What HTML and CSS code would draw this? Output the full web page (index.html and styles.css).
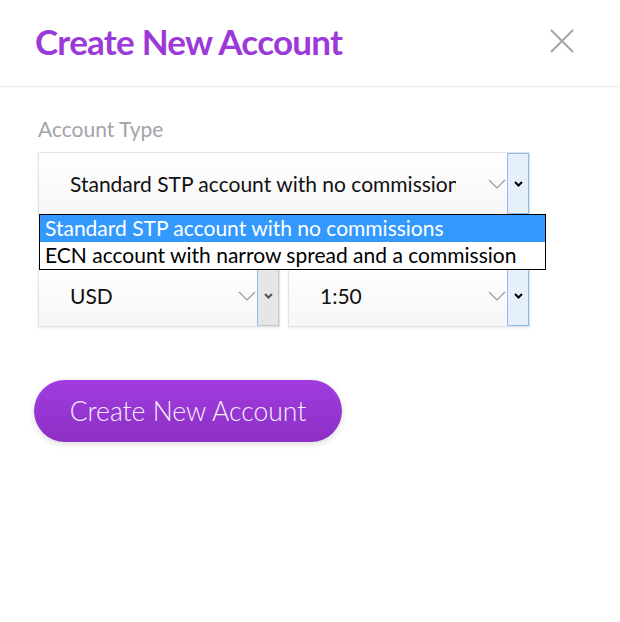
FILE: index.html
```
<!DOCTYPE html>
<html>
<head>
<meta charset="utf-8">
<link rel="stylesheet" href="styles.css">
</head>
<body>
<div class="modal">
  <div class="header">
    <h1 class="title">Create New Account</h1>
    <svg class="close" width="24" height="24" viewBox="0 0 24 24"><path d="M1 1 L23 23 M23 1 L1 23" stroke="#a3a3ab" stroke-width="2" fill="none"/></svg>
  </div>
  <div class="content">
    <div class="field">
      <div class="label">Account Type</div>
      <div class="select-wrap">
        <div class="select">
          <span class="value">Standard STP account with no commissions</span>
          <svg class="chev" width="18" height="10" viewBox="0 0 18 10"><path d="M1 1 L9 9 L17 1" stroke="#9a9a9a" stroke-width="1.2" fill="none"/></svg>
          <span class="native focus"><svg width="9" height="6" viewBox="0 0 9 6"><path d="M1 1 L4.5 4.5 L8 1" stroke="#000" stroke-width="2" fill="none"/></svg></span>
        </div>
        <div class="dropdown">
          <div class="option selected">Standard STP account with no commissions</div>
          <div class="option">ECN account with narrow spread and a commission</div>
        </div>
      </div>
    </div>
    <div class="row">
      <div class="field half">
        <div class="select">
          <span class="value">USD</span>
          <svg class="chev" width="18" height="10" viewBox="0 0 18 10"><path d="M1 1 L9 9 L17 1" stroke="#9a9a9a" stroke-width="1.2" fill="none"/></svg>
          <span class="native gray"><svg width="9" height="6" viewBox="0 0 9 6"><path d="M1 1 L4.5 4.5 L8 1" stroke="#555" stroke-width="2" fill="none"/></svg></span>
        </div>
      </div>
      <div class="field half">
        <div class="select">
          <span class="value">1:50</span>
          <svg class="chev" width="18" height="10" viewBox="0 0 18 10"><path d="M1 1 L9 9 L17 1" stroke="#9a9a9a" stroke-width="1.2" fill="none"/></svg>
          <span class="native focus"><svg width="9" height="6" viewBox="0 0 9 6"><path d="M1 1 L4.5 4.5 L8 1" stroke="#000" stroke-width="2" fill="none"/></svg></span>
        </div>
      </div>
    </div>
    <button class="btn">Create New Account</button>
  </div>
</div>
</body>
</html>
```
FILE: styles.css
```
* { box-sizing: border-box; }
html, body { margin: 0; padding: 0; background: #fff; }
body { font-family: Lato, "Open Sans", sans-serif; width: 620px; height: 622px; overflow: hidden; }
.modal { width: 620px; }
.header {
  height: 87px;
  border-bottom: 1px solid #ececec;
  display: flex;
  align-items: flex-start;
  justify-content: space-between;
  padding: 21px 46px 0 35px;
}
.title {
  margin: 0;
  font-size: 35px;
  font-weight: 700;
  color: #9b3ad9;
  letter-spacing: -0.75px;
  line-height: 40px;
}
.close { margin-top: 8px; }
.content { padding: 30px 90px 0 38px; }
.label {
  font-size: 21px;
  color: #a3a3ab;
  line-height: 24px;
  margin-bottom: 11px;
}
.select-wrap { position: relative; }
.select {
  height: 63px;
  border: 1px solid #e3e3e3;
  background: linear-gradient(#ffffff, #f6f6f6);
  box-shadow: 0 1px 2px rgba(0,0,0,0.08);
  display: flex;
  align-items: center;
  padding-left: 31px;
  font-size: 21px;
  color: #111;
}
.value {
  flex: 1;
  white-space: nowrap;
  overflow: hidden;
  min-width: 0;
  margin-right: 32px;
}
.chev { flex: none; margin-right: 1px; }
.native {
  flex: none;
  width: 22px;
  align-self: stretch;
  display: flex;
  align-items: center;
  justify-content: center;
}
.native.focus { background: #e5f0fc; border: 1px solid #8cbcee; }
.native.gray { background: #e6e6e6; border: 1px solid #c8c8c8; border-left-color: #8cbcee; }
.dropdown {
  position: absolute;
  left: 1px;
  top: 62px;
  width: 507px;
  border: 1px solid #000;
  background: #fff;
  font-size: 21px;
  z-index: 2;
}
.option {
  height: 27px;
  line-height: 26px;
  padding-left: 5px;
  color: #000;
  white-space: nowrap;
}
.option.selected { background: #3399ff; color: #fff; }
.row {
  display: flex;
  gap: 8px;
  margin-top: 49px;
}
.half { flex: 1; }
.btn {
  margin-top: 53px;
  margin-left: -4px;
  width: 308px;
  height: 62px;
  border: none;
  border-radius: 31px;
  background: linear-gradient(#a13ce0, #8c2fc4);
  color: #f6eefc;
  font-family: Lato, sans-serif;
  font-size: 26.5px;
  font-weight: 300;
  box-shadow: 0 2px 6px rgba(0,0,0,0.15);
  padding: 0;
}
```
